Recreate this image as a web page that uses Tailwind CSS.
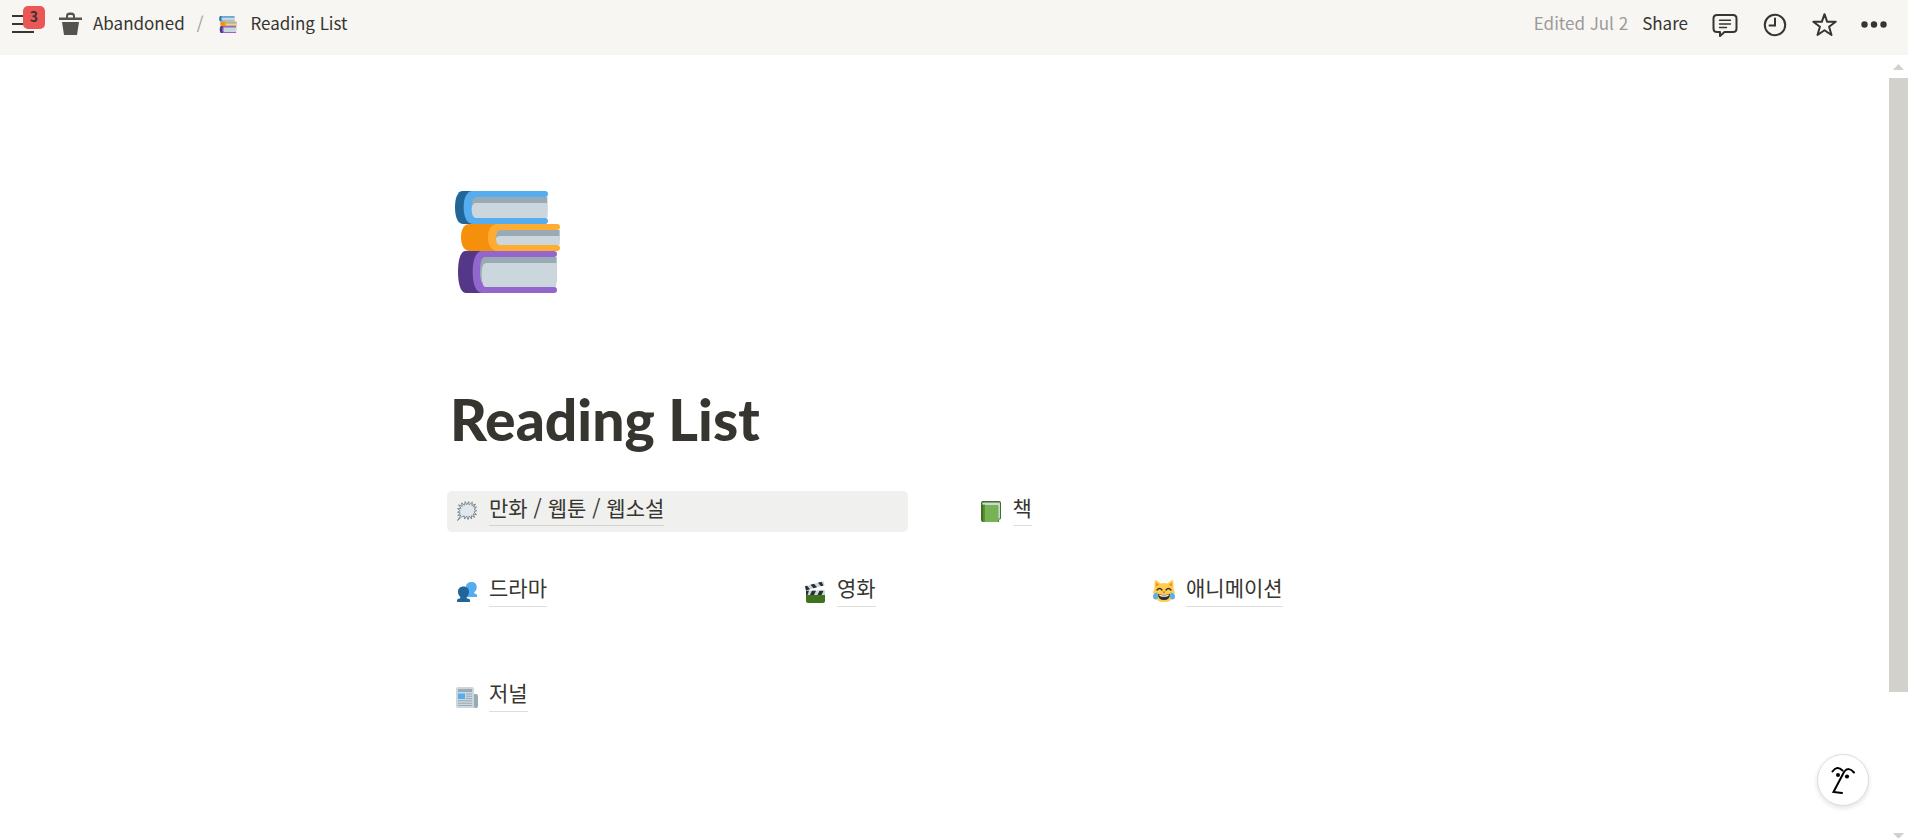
<!DOCTYPE html>
<html lang="ko">
<head>
<meta charset="utf-8">
<meta name="viewport" content="width=device-width, initial-scale=1">
<title>Reading List</title>
<script src="https://cdn.jsdelivr.net/npm/@tailwindcss/browser@4"></script>
</head>
<body class="bg-white font-['Noto_Sans_CJK_KR','Noto_Sans',sans-serif] text-[#37352f]">
<svg class="hidden" aria-hidden="true">
  <symbol id="books" viewBox="45 33 315 306">
    <path fill="#226699" d="M100 33H68C52 33 45 56 45 82s7 50 23 50h32z"/>
    <path fill="#55acee" d="M315 33H98C79 33 71 56 71 82s8 50 27 50h217a9 9 0 0 0 0-18V51a9 9 0 0 0 0-18z"/>
    <path fill="#9aaab4" d="M322 51H108c-9 0-13 14-13 31h227z"/>
    <path fill="#ccd6dd" d="M322 69H108c-8 0-13 8-13 20 0 15 5 25 14 25h213c2-15 2-30 0-45z"/>
    <path fill="#f4900c" d="M175 132H88c-16 0-25 17-25 40s9 41 25 41h87z"/>
    <path fill="#ffac33" d="M351 132H172c-19 0-28 17-28 40s9 41 28 41h179a9 9 0 0 0 0-18v-45a9 9 0 0 0 0-18z"/>
    <path fill="#9aaab4" d="M359 150H181c-9 0-14 12-14 30h192z"/>
    <path fill="#ccd6dd" d="M360 168H181c-9 0-14 4-13 9 1 12 5 18 13 18h178z"/>
    <path fill="#553788" d="M125 213H77c-16 0-23 28-23 63s8 63 23 63h48z"/>
    <path fill="#9266cc" d="M342 213H127c-20 0-29 28-29 63s9 63 29 63h215a9 9 0 0 0 0-18v-90a9 9 0 0 0 0-18z"/>
    <path fill="#9aaab4" d="M350 231H134c-10 0-14 20-14 45 0 12 1 20 4 30h226z"/>
    <path fill="#ccd6dd" d="M350 249H139c-9 0-14 10-14 34 0 26 4 38 12 38h211c4-23 4-48 2-72z"/>
  </symbol>
</svg>

<div class="flex h-screen flex-col overflow-hidden">
  <header class="flex h-[55px] shrink-0 items-start justify-between bg-[#f7f6f3] text-[17px] leading-[45px]">
    <nav class="flex items-start pl-3" aria-label="Breadcrumb">
      <button class="relative h-[46px] w-[33px]" aria-label="Open sidebar">
        <svg class="absolute top-[15px] left-0 h-[18px] w-[22px]" viewBox="0 0 22 18" stroke="#37352f" stroke-width="2"><path d="M0 1h22M0 9h22M0 17h22"/></svg>
        <span class="absolute top-[6px] left-[11px] flex h-[23px] w-[22px] items-center justify-center rounded-[5px] bg-[#eb5757] pb-1 text-[14px] leading-5 font-bold">3</span>
      </button>
      <a href="#" class="ml-[14px] flex">
        <svg class="mt-3 h-[23px] w-[23px]" viewBox="0 0 23 23" fill="#55534e"><path d="M0 5.500h7V4q0-3.500 3.500-3.500h2Q16 .5 16 4v1.500h7V8H0zM9 5.500h5V4.200Q14 3 12.500 3h-2Q9 3 9 4.200zM3 10h17l-2 13H5z"/></svg>
        <span class="ml-[11px]">Abandoned</span>
      </a>
      <span class="mr-4 ml-3 text-[#9b9a97]">/</span>
      <a href="#" class="flex">
        <svg class="mt-4 h-[17px] w-[18px]"><use href="#books"/></svg>
        <span class="ml-[13px]">Reading List</span>
      </a>
    </nav>
    <div class="flex items-start pr-[21px]">
      <span class="text-[#9b9a97]">Edited Jul 2</span>
      <button class="ml-[14px]">Share</button>
      <button class="ml-[24px] pt-[13px]" aria-label="Comments">
        <svg class="h-6 w-[26px]" viewBox="0 0 26 24" fill="none" stroke="#37352f" stroke-width="2" stroke-linejoin="round"><path d="M5 2h16q3.500 0 3.500 3.500v10q0 3.500-3.500 3.500h-8.500L8 23v-4H5q-3.500 0-3.500-3.500v-10Q1.500 2 5 2z"/><path stroke-width="1.400" stroke-linecap="round" d="M7.500 7.300h11M7.500 11h11M7.500 14.500h7"/></svg>
      </button>
      <button class="ml-[25px] pt-[13px]" aria-label="Updates">
        <svg class="h-6 w-6" viewBox="0 0 24 24" fill="none" stroke="#37352f" stroke-width="2"><circle cx="12" cy="12" r="10.200"/><path stroke-linecap="round" d="M12 5.500V12.500H6.500"/></svg>
      </button>
      <button class="ml-[25px] pt-[12px]" aria-label="Favorite">
        <svg class="h-[25px] w-[25px]" viewBox="0 0 25 25" fill="none" stroke="#37352f" stroke-width="2" stroke-linejoin="round"><path d="M12.500 2.200l2.700 7.600h8.500l-6.600 5 2.400 8.200-7-4.800-7 4.800 2.400-8.200-6.600-5h8.500z"/></svg>
      </button>
      <button class="ml-6 pt-[21px]" aria-label="More">
        <svg class="h-[7px] w-[26px]" viewBox="0 0 26 7" fill="#37352f"><circle cx="3.500" cy="3.500" r="3.200"/><circle cx="13" cy="3.500" r="3.200"/><circle cx="22.500" cy="3.500" r="3.200"/></svg>
      </button>
    </div>
  </header>

  <div class="flex min-h-0 grow">
    <main class="grow overflow-hidden pr-[11px] pt-[136px]">
      <div class="mx-auto max-w-[984px]">
        <svg class="ml-2 h-[102px] w-[105px]" role="img" aria-label="Books"><use href="#books"/></svg>
        <h1 class="mt-[90px] pl-[3px] font-['Lato',sans-serif] text-[57px] leading-[72px] font-black">Reading List</h1>

        <div class="mt-9 grid grid-cols-2 gap-x-[63px] text-[21px] leading-7">
          <a href="#" class="flex h-[41px] items-start rounded-[5px] bg-[#f0f0ee] pl-[10px]">
            <svg class="mt-[10px] h-5 w-5" viewBox="0 0 20 20" fill="#e1e8ed" stroke="#66757f" stroke-width=".8"><path d="M.5 19.500L3.800 14 .8 14.500 3.200 12 .6 11.200 3.200 9.600.5 7.600 4 7.300 1.500 3.800 5.300 5.300 4.500 1.800 7.400 4.200 8.200.6 9.800 3.800 11.700.5 12.300 3.800 15.300 1 14.900 4.600 18.500 3 16.500 6 19.600 6.100 17.100 8.200 19.700 9.700 17 10.900 19.500 13.700 16.200 13 17.600 16.400 14.500 14.600 14.600 18 12.200 15 11.100 18.500 9.700 15.200 7.600 18 7.200 14.800 4.500 16z"/></svg>
            <span class="ml-3 mt-[2px] border-b border-[#d3d3d1] pb-1">만화 / 웹툰 / 웹소설</span>
          </a>
          <a href="#" class="flex h-[41px] items-start pl-[10px]">
            <svg class="mt-[10px] h-[21px] w-5" viewBox="0 0 20 21"><path fill="#3e721d" d="M2 0h16q2 0 2 2v15q0 1.500-2 1.500V21H2q-2 0-2-2V2Q0 0 2 0z"/><path fill="#ccd6dd" d="M3 1.500h15q1 0 1 1V17l-2 1.500V4H3Q1 4 1 2.800 1 1.500 3 1.500z"/><path fill="#77b255" d="M4 4h12q1.500 0 1.500 1.500v14q0 1.500-1.500 1.500H4z"/><path fill="#5c913b" d="M2.200 3.500H4V21H2.200z"/></svg>
            <span class="ml-3 mt-[2px] border-b border-[#dededc] pb-1">책</span>
          </a>
        </div>

        <div class="mt-10 grid grid-cols-3 gap-x-[63px] text-[21px] leading-7">
          <a href="#" class="flex h-[41px] items-start pl-[10px]">
            <svg class="mt-[10px] h-5 w-5" viewBox="0 0 20 20"><path fill="#55acee" d="M14.500 0C11 0 9 2 9 5c0 2.500 1 4.500 2.500 5.600V12l-3 1v2H20v-1.500q0-1.500-1.500-1.800l-1.300-.4v-1c1.500-1 2.500-3 2.500-5.300C19.700 2 17.800 0 14.500 0z"/><path fill="#226699" d="M6.500 4.500C3 4.500 1 6.700 1 9.700c0 2.300.9 4.200 2.300 5.200v1.300l-1.800.5Q0 17 0 18.500V20h13v-1.500q0-1.500-1.500-1.800l-1.800-.5v-1.300c1.400-1 2.300-2.900 2.300-5.200 0-3-2-5.200-5.500-5.200z"/></svg>
            <span class="ml-3 mt-[1px] border-b border-[#dededc] pb-[5px]">드라마</span>
          </a>
          <a href="#" class="flex h-[41px] items-start pl-[9px]">
            <svg class="mt-[9px] h-[22px] w-5" viewBox="0 0 20 22"><path fill="#3e721d" d="M1 13h19v7q0 2-2 2H3q-2 0-2-2z"/><path fill="#ccd6dd" d="M0 5.200L18.500.3l1 4L1 9.500zM1 9.500h19V14H1z"/><path fill="#292f33" d="M0 5.200l2-.5 3 3.600-4 1.100zM5.500 3.700L9 2.800l3 3.500-3.500 1zM13 1.700l3.500-1 2 3.800-2.500.7zM1 9.700h3L2.500 14H1zM7 9.700h4L9 14H5zM14.500 9.700h4l-2 4.300h-4z"/></svg>
            <span class="ml-3 mt-[1px] border-b border-[#dededc] pb-[5px]">영화</span>
          </a>
          <a href="#" class="flex h-[41px] items-start pl-2">
            <svg class="mt-[8px] h-[22px] w-[22px]" viewBox="0 0 22 22"><path fill="#ffcc4d" d="M2 .2q.8-.5 1.700.3l4 3q3.300-1 6.600 0l4-3q.9-.8 1.700-.3.800 4 .6 8 1.400 3 .9 7Q19 22 11 22T.5 15.200q-.5-4 .9-7Q1.200 4 2 .2z"/><path fill="#f18f26" d="M3 2.500l3 2.300-3 2zM19 2.500l-3 2.300 3 2z"/><path fill="none" stroke="#292f33" stroke-width="1.300" stroke-linecap="round" d="M4 10q2.500-3 5 0M13 10q2.500-3 5 0"/><path fill="#e75a70" d="M9.300 11.500h3.400L11 13.500z"/><path fill="#292f33" d="M5 14q6 2 12 0 0 6-6 6t-6-6z"/><path fill="#fff" d="M6 14.700q5 1.500 10 0-.5 2-5 2t-5-2z"/><path fill="#5dadec" d="M4.500 12.500Q0 13 0 16.500q0 3 2.500 3 3.500-.5 2-7zM17.500 12.500q4.500.5 4.500 4 0 3-2.500 3-3.500-.5-2-7z"/></svg>
            <span class="ml-[11px] mt-[1px] border-b border-[#dededc] pb-[5px]">애니메이션</span>
          </a>
        </div>

        <div class="mt-16 text-[21px] leading-7">
          <a href="#" class="flex h-[41px] items-start pl-[9px]">
            <svg class="mt-[10px] h-[21px] w-[22px]" viewBox="0 0 22 21"><path fill="#99aab5" d="M15 7h5q2 0 2 2v10q0 2-2 2h-5z"/><path fill="#ccd6dd" d="M2 0h14q2 0 2 2v17q0 2 2 2H2q-2 0-2-2V2Q0 0 2 0z"/><path fill="#99aab5" d="M2 2h14v3H2zM10 6.500h6v1h-6zM10 8.700h6v1h-6zM10 11h6v1h-6zM2 13.300h14v1H2zM2 15.700h14v1H2zM2 18h14v1H2z"/><path fill="#55acee" d="M2 6.500h7V12H2z"/></svg>
            <span class="ml-[11px] mt-[1px] border-b border-[#dededc] pb-[5px]">저널</span>
          </a>
        </div>
      </div>
    </main>

    <div class="flex w-[19px] shrink-0 flex-col items-center pt-[9px]" aria-hidden="true">
      <svg class="h-[6px] w-[11px] shrink-0" viewBox="0 0 11 6" fill="#d3d1cb"><path d="M0 6L5.500 0 11 6z"/></svg>
      <div class="mt-2 mb-[141px] w-full grow bg-[#d3d1cb]"></div>
      <svg class="h-[5px] w-[11px] shrink-0" viewBox="0 0 11 5" fill="#d3d1cb"><path d="M0 0h11L5.500 6z"/></svg>
    </div>
  </div>
</div>

<button class="fixed right-[39px] bottom-8 flex h-[52px] w-[52px] items-center justify-center rounded-full border border-[#dcdcdb] bg-white shadow-[0_2px_5px_rgba(15,15,15,0.12)]" aria-label="Help">
  <svg class="h-7 w-6" viewBox="0 0 24 28" fill="none" stroke="#000" stroke-width="2" stroke-linecap="round"><path d="M1.500 5.500Q6-1 11.500 4.500M23 6.500Q17.500 0 13 6L2.500 26l8.500 1"/><circle cx="7" cy="9" r="2" fill="#000" stroke="none"/><circle cx="16" cy="10.500" r="2.100" fill="#000" stroke="none"/></svg>
</button>
</body>
</html>
